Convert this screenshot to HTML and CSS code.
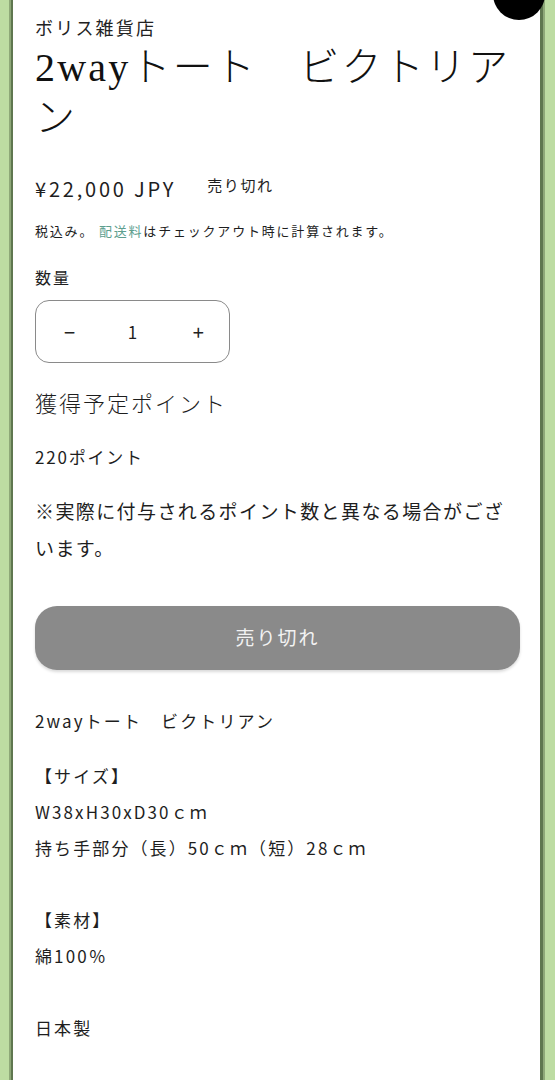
FILE: index.html
```html
<!DOCTYPE html>
<html lang="ja">
<head>
    <meta charset="UTF-8">
    <meta name="viewport" content="width=device-width, initial-scale=1.0">
    <title>2wayトート　ビクトリアン</title>
    <link rel="stylesheet" href="styles.css">
</head>
<body>
    <div class="page">
        <div class="dot"></div>
        <p class="vendor">ボリス雑貨店</p>
        <h1 class="title">2wayトート　ビクトリアン</h1>

        <div class="price-row">
            <span class="price">¥22,000 JPY</span>
            <span class="badge">売り切れ</span>
        </div>
        <p class="tax">税込み。 <a href="#">配送料</a>はチェックアウト時に計算されます。</p>

        <p class="qty-label">数量</p>
        <div class="qty">
            <button class="qty-btn">−</button>
            <span class="qty-num">1</span>
            <button class="qty-btn">+</button>
        </div>

        <h2 class="points-title">獲得予定ポイント</h2>
        <p class="points">220ポイント</p>
        <p class="notice">※実際に付与されるポイント数と異なる場合がございます。</p>

        <button class="soldout" disabled>売り切れ</button>

        <div class="desc">
            <p class="desc-name">2wayトート　ビクトリアン</p>
            <p>【サイズ】<br>W38xH30xD30ｃｍ<br>持ち手部分（長）50ｃｍ（短）28ｃｍ<br><br>【素材】<br>綿100％<br><br>日本製</p>
        </div>
    </div>
</body>
</html>
```

FILE: styles.css
```css
body {
    margin: 0;
    background-color: white;
    font-family: "Noto Sans CJK JP", "Noto Sans", sans-serif;
    color: #1e1e1e;
}
.page {
    position: relative;
    min-height: 1080px;
    box-sizing: border-box;
    padding: 15px 35px 0 35px;
    overflow: hidden;
    background: linear-gradient(to right,
        #bddca2 0, #bddca2 9px,
        #8ea878 9px, #8ea878 11px,
        #5f774f 11px, #5f774f 13px,
        white 13px, white calc(100% - 15px),
        #5f774f calc(100% - 15px), #5f774f calc(100% - 12px),
        #8ea878 calc(100% - 12px), #8ea878 calc(100% - 10px),
        #bddca2 calc(100% - 10px));
}
.dot {
    position: absolute;
    top: -32px;
    right: 10px;
    width: 52px;
    height: 52px;
    border-radius: 50%;
    background-color: black;
}
p {
    margin: 0;
}
.vendor {
    font-size: 18px;
    line-height: 24px;
    letter-spacing: 2.2px;
    color: #222;
}
.title {
    margin: 4px 0 0 0;
    font-family: "Liberation Serif", "Noto Sans CJK JP", serif;
    font-weight: 300;
    font-size: 40px;
    line-height: 50px;
    letter-spacing: 2.2px;
    color: #111;
}
.price-row {
    display: flex;
    align-items: center;
    gap: 31px;
    margin-top: 31px;
    height: 28px;
}
.price {
    font-size: 20px;
    letter-spacing: 2.8px;
}
.badge {
    font-size: 15px;
    letter-spacing: 1.6px;
    margin-top: -8px;
}
.tax {
    margin-top: 19px;
    font-size: 13px;
    line-height: 20px;
    letter-spacing: 1.8px;
}
.tax a {
    color: #5d9e8e;
    text-decoration: none;
}
.qty-label {
    margin-top: 24px;
    font-size: 16px;
    line-height: 24px;
    letter-spacing: 2px;
}
.qty {
    margin-top: 11px;
    width: 195px;
    height: 63px;
    box-sizing: border-box;
    border: 1px solid #8a8a8a;
    border-radius: 14px;
    display: grid;
    grid-template-columns: 1fr 1fr 1fr;
    align-items: center;
    justify-items: center;
}
.qty-btn {
    background: none;
    border: none;
    font-family: "Noto Sans CJK JP", sans-serif;
    font-size: 20px;
    color: #222;
    padding: 0 0 0 3px;
}
.qty-num {
    font-size: 17px;
}
.points-title {
    margin: 26px 0 0 0;
    font-family: "Liberation Serif", "Noto Sans CJK JP", serif;
    font-weight: 300;
    font-size: 22px;
    line-height: 32px;
    letter-spacing: 2px;
}
.points {
    margin-top: 22px;
    font-size: 17px;
    line-height: 28px;
    letter-spacing: 1.8px;
}
.notice {
    margin-top: 21px;
    font-size: 19px;
    line-height: 37px;
    letter-spacing: 1.4px;
}
.soldout {
    display: block;
    width: 100%;
    height: 64px;
    margin-top: 40px;
    border: none;
    border-radius: 22px;
    background-color: #8a8a8a;
    color: #f2f2f2;
    font-family: "Noto Sans CJK JP", sans-serif;
    font-size: 19px;
    letter-spacing: 2px;
    padding-bottom: 4px;
    box-shadow: 0 2px 3px rgba(0, 0, 0, 0.15);
}
.desc {
    margin-top: 33px;
    font-size: 17px;
    line-height: 36px;
    letter-spacing: 2.1px;
}
.desc-name {
    margin-bottom: 19px;
}
```
